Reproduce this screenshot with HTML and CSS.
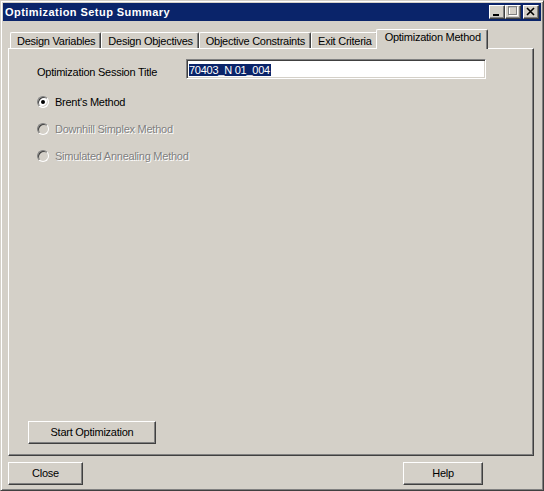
FILE: index.html
```html
<!DOCTYPE html>
<html>
<head>
<meta charset="utf-8">
<link rel="stylesheet" href="styles.css">
</head>
<body>
<div class="window">
  <div class="titlebar">
    <span class="title">Optimization Setup Summary</span>
    <div class="tb-buttons">
      <div class="tb-btn"><svg width="14" height="12" viewBox="0 0 14 12"><rect x="3" y="8" width="6" height="2" fill="#000"/></svg></div>
      <div class="tb-btn"><svg width="14" height="12" viewBox="0 0 14 12"><rect x="3.5" y="1.5" width="8" height="8" fill="none" stroke="#fff"/><rect x="2.5" y="0.5" width="8" height="8" fill="none" stroke="#808080"/><rect x="2.5" y="0.5" width="8" height="1" fill="#808080"/></svg></div>
      <div class="tb-btn tb-close"><svg width="14" height="12" viewBox="0 0 14 12"><path d="M3 2 L10 9 M10 2 L3 9" stroke="#000" stroke-width="1.6" fill="none"/></svg></div>
    </div>
  </div>
  <div class="body">
    <div class="tabs">
      <div class="tab">Design Variables</div>
      <div class="tab">Design Objectives</div>
      <div class="tab">Objective Constraints</div>
      <div class="tab">Exit Criteria</div>
      <div class="tab active">Optimization Method</div>
    </div>
    <div class="panel">
      <div class="title-row">
        <span class="field-label">Optimization Session Title</span>
        <div class="textbox"><span class="selected-text">70403_N 01_004</span></div>
      </div>
      <div class="radios">
        <div class="radio-row"><span class="radio checked"></span><span class="radio-label">Brent's Method</span></div>
        <div class="radio-row disabled"><span class="radio"></span><span class="radio-label">Downhill Simplex Method</span></div>
        <div class="radio-row disabled"><span class="radio"></span><span class="radio-label">Simulated Annealing Method</span></div>
      </div>
      <div class="btn start-btn">Start Optimization</div>
    </div>
    <div class="footer">
      <div class="btn close-btn">Close</div>
      <div class="btn help-btn">Help</div>
    </div>
  </div>
</div>
</body>
</html>
```
FILE: styles.css
```css
html, body {
  margin: 0;
  padding: 0;
  background: #d4d0c8;
}
body {
  font-family: "Liberation Sans", Arial, sans-serif;
  font-size: 11px;
  letter-spacing: -0.25px;
  color: #000;
}
.window {
  width: 544px;
  height: 491px;
  box-sizing: border-box;
  border: 1px solid;
  border-color: #d4d0c8 #404040 #404040 #d4d0c8;
  box-shadow: inset 1px 1px #fff, inset -1px -1px #808080;
  padding: 2px;
  display: flex;
  flex-direction: column;
  background: #d4d0c8;
}
.titlebar {
  height: 18px;
  background: #0a246a;
  display: flex;
  align-items: center;
  justify-content: space-between;
  padding: 0 2px 0 2px;
}
.title {
  color: #fff;
  font-weight: bold;
  font-size: 11px;
  letter-spacing: 0.45px;
}
.tb-buttons {
  display: flex;
  align-items: center;
}
.tb-btn {
  width: 16px;
  height: 14px;
  box-sizing: border-box;
  background: #d4d0c8;
  border: 1px solid;
  border-color: #fff #404040 #404040 #fff;
  box-shadow: inset -1px -1px #808080;
  display: flex;
}
.tb-btn svg {
  display: block;
}
.tb-close {
  margin-left: 2px;
}
.body {
  flex: 1;
  display: flex;
  flex-direction: column;
  padding: 8px 4px 3px 5px;
}
.tabs {
  display: flex;
  align-items: flex-end;
  padding-left: 2px;
  margin-bottom: -1px;
  height: 20px;
}
.tab {
  height: 17px;
  box-sizing: border-box;
  padding: 2px 5px 0 6px;
  line-height: 13px;
  border-top: 1px solid #fff;
  border-left: 1px solid #fff;
  border-right: 1px solid #404040;
  box-shadow: inset -1px 0 #808080;
  border-radius: 2px 2px 0 0;
  background: #d4d0c8;
  white-space: nowrap;
}
.tab.active {
  height: 20px;
  margin: 0 -2px 0 -2px;
  padding: 1px 6px 0 8px;
  position: relative;
  z-index: 1;
}
.panel {
  flex: 1;
  box-sizing: border-box;
  width: 526px;
  border: 1px solid;
  border-color: #fff #404040 #404040 #fff;
  box-shadow: inset -1px -1px #808080;
  display: flex;
  flex-direction: column;
  padding: 10px 0 11px 28px;
}
.title-row {
  display: flex;
  align-items: flex-start;
}
.field-label {
  width: 149px;
  padding-top: 7px;
  line-height: 13px;
}
.textbox {
  width: 300px;
  height: 20px;
  box-sizing: border-box;
  background: #fff;
  border: 1px solid;
  border-color: #808080 #fff #fff #808080;
  box-shadow: inset 1px 1px #404040, inset -1px -1px #d4d0c8;
  padding: 3px 2px 0 2px;
  line-height: 14px;
}
.selected-text {
  background: #0a246a;
  color: #fff;
  padding-right: 1px;
}
.radios {
  display: flex;
  flex-direction: column;
  gap: 13px;
  margin-top: 16px;
}
.radio-row {
  display: flex;
  align-items: center;
  height: 14px;
}
.radio {
  width: 12px;
  height: 12px;
  box-sizing: border-box;
  border-radius: 50%;
  border: 1px solid;
  border-color: #808080 #fff #fff #808080;
  box-shadow: inset 1px 1px #404040, inset -1px -1px #d4d0c8;
  background: #fff;
  display: flex;
  align-items: center;
  justify-content: center;
  margin-right: 6px;
}
.radio.checked::after {
  content: "";
  width: 4px;
  height: 4px;
  border-radius: 50%;
  background: #000;
}
.radio-row.disabled .radio {
  background: #d4d0c8;
}
.radio-row.disabled .radio-label {
  color: #808080;
  text-shadow: 1px 1px 0 #fff;
}
.btn {
  height: 23px;
  box-sizing: border-box;
  background: #d4d0c8;
  border: 1px solid;
  border-color: #fff #404040 #404040 #fff;
  box-shadow: inset -1px -1px #808080;
  display: flex;
  align-items: center;
  justify-content: center;
  padding-bottom: 1px;
}
.start-btn {
  margin-top: auto;
  margin-left: -9px;
  width: 128px;
}
.footer {
  display: flex;
  justify-content: space-between;
  margin-top: 6px;
  padding-right: 54px;
}
.close-btn {
  width: 75px;
}
.help-btn {
  width: 80px;
}
```
